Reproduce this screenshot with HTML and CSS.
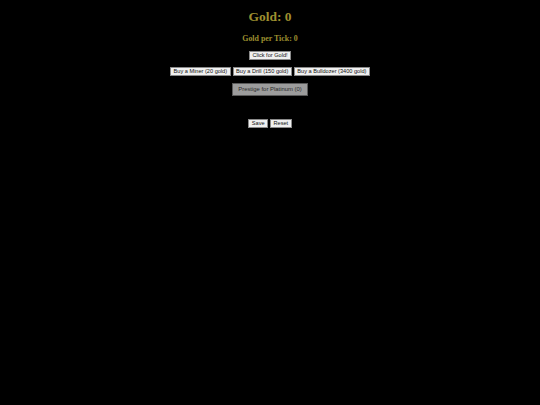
FILE: index.html
```html
<!DOCTYPE html>
<html>
<head>
<meta charset="utf-8">
<link rel="stylesheet" href="styles.css">
</head>
<body>
<main class="game">
  <h1 class="gold">Gold: 0</h1>
  <h3 class="rate">Gold per Tick: 0</h3>
  <div class="row row-click">
    <button class="btn">Click for Gold!</button>
  </div>
  <div class="row row-buy">
    <button class="btn">Buy a Miner (20 gold)</button>
    <button class="btn">Buy a Drill (150 gold)</button>
    <button class="btn">Buy a Bulldozer (3400 gold)</button>
  </div>
  <div class="row row-prestige">
    <button class="btn btn-prestige">Prestige for Platinum (0)</button>
  </div>
  <div class="row row-save">
    <button class="btn">Save</button>
    <button class="btn">Reset</button>
  </div>
</main>
</body>
</html>
```
FILE: styles.css
```css
html, body {
  margin: 0;
  padding: 0;
  background: #000;
}
body {
  width: 540px;
  height: 405px;
  font-family: "Liberation Serif", serif;
}
.game {
  display: flex;
  flex-direction: column;
  align-items: center;
}
.gold {
  margin: 9px 0 0;
  height: 16px;
  line-height: 16px;
  font-size: 13.5px;
  font-weight: bold;
  color: #9d8f2f;
}
.rate {
  margin: 9px 0 0;
  height: 10px;
  line-height: 10px;
  font-size: 7.9px;
  font-weight: bold;
  color: #9d8f2f;
}
.row {
  display: flex;
  justify-content: center;
  gap: 2px;
}
.row-click { margin-top: 7px; }
.row-buy { margin-top: 7px; }
.row-prestige { margin-top: 7px; }
.row-save { margin-top: 23px; }
.btn {
  box-sizing: border-box;
  height: 9px;
  padding: 0 2.5px;
  margin: 0;
  font-family: "Liberation Sans", Arial, sans-serif;
  font-size: 5.6px;
  line-height: 7px;
  color: #111;
  background: #f0f0f0;
  border: 1px solid #8a8a8a;
  border-radius: 0;
  white-space: nowrap;
}
.btn-prestige {
  height: 13px;
  padding: 0 5px;
  font-size: 5.9px;
  line-height: 11px;
  background: #9c9c9c;
  color: #2a2a2a;
  border: 1px solid #5a5a5a;
}
```
